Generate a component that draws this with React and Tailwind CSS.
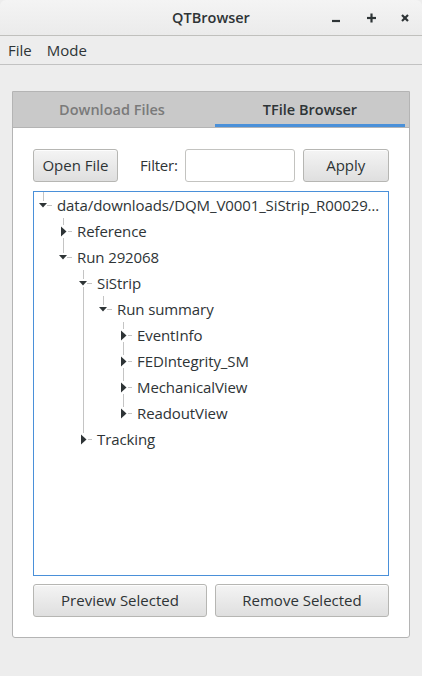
import React from 'react';

const font = { fontFamily: "'Open Sans', 'Noto Sans', sans-serif" };

const rows = [
  { depth: 0, label: "data/downloads/DQM_V0001_SiStrip_R00029…", arrow: "down", next: false, guides: [] },
  { depth: 1, label: "Reference", arrow: "right", next: true, guides: [false] },
  { depth: 1, label: "Run 292068", arrow: "down", next: false, guides: [false] },
  { depth: 2, label: "SiStrip", arrow: "down", next: true, guides: [false, false] },
  { depth: 3, label: "Run summary", arrow: "down", next: false, guides: [false, false, true] },
  { depth: 4, label: "EventInfo", arrow: "right", next: true, guides: [false, false, true, false] },
  { depth: 4, label: "FEDIntegrity_SM", arrow: "right", next: true, guides: [false, false, true, false] },
  { depth: 4, label: "MechanicalView", arrow: "right", next: true, guides: [false, false, true, false] },
  { depth: 4, label: "ReadoutView", arrow: "right", next: false, guides: [false, false, true, false] },
  { depth: 2, label: "Tracking", arrow: "right", next: false, guides: [false, false] },
];

const Guide = ({ on }) => (
  <svg width="20" height="26" className="shrink-0">
    {on && <line x1="9.5" y1="0" x2="9.5" y2="26" stroke="#c4c4c4" />}
  </svg>
);

const Branch = ({ arrow, next }) => (
  <svg width="20" height="26" className="shrink-0">
    {arrow === "down" ? (
      <>
        <line x1="9.5" y1="0" x2="9.5" y2="9" stroke="#c4c4c4" />
        {next && <line x1="9.5" y1="17" x2="9.5" y2="26" stroke="#c4c4c4" />}
        <line x1="13" y1="13.5" x2="18" y2="13.5" stroke="#c4c4c4" />
        <polygon points="5,11 13,11 9,15.5" fill="#2e3436" />
      </>
    ) : (
      <>
        <line x1="9.5" y1="0" x2="9.5" y2="7" stroke="#c4c4c4" />
        {next && <line x1="9.5" y1="20" x2="9.5" y2="26" stroke="#c4c4c4" />}
        <line x1="14" y1="13.5" x2="18" y2="13.5" stroke="#c4c4c4" />
        <polygon points="7,8.5 12.5,13.5 7,18.5" fill="#2e3436" />
      </>
    )}
  </svg>
);

const Button = ({ children, className = "" }) => (
  <button
    className={`h-[33px] rounded-[3px] border border-[#b6b6b3] bg-gradient-to-b from-[#f4f4f4] to-[#dfdfdf] text-[15px] text-[#2e3436] shadow-[0_1px_0_rgba(255,255,255,0.8)_inset] ${className}`}
  >
    {children}
  </button>
);

export default function App() {
  return (
    <div className="w-[422px] h-[676px] bg-[#ededed] flex flex-col text-[#2e3436]" style={font}>
      {/* Title bar */}
      <div className="h-[36px] shrink-0 rounded-t-[6px] bg-gradient-to-b from-[#f4f4f4] to-[#ebebeb] border-b border-[#c0c0bd] flex items-center relative">
        <div className="flex-1 text-center text-[14.5px] font-semibold text-[#2e3436]">QTBrowser</div>
        <div className="absolute right-[2px] top-0 h-full flex items-center">
          <svg width="34" height="36" viewBox="0 0 34 36">
            <line x1="0" y1="21" x2="8" y2="21" stroke="#2e3436" strokeWidth="2.2" />
          </svg>
          <svg width="34" height="36" viewBox="0 0 34 36">
            <line x1="1" y1="18" x2="10" y2="18" stroke="#2e3436" strokeWidth="2.2" />
            <line x1="5.5" y1="13.5" x2="5.5" y2="22.5" stroke="#2e3436" strokeWidth="2.2" />
          </svg>
          <svg width="20" height="36" viewBox="0 0 20 36">
            <line x1="2" y1="15" x2="8" y2="21" stroke="#2e3436" strokeWidth="2.2" />
            <line x1="8" y1="15" x2="2" y2="21" stroke="#2e3436" strokeWidth="2.2" />
          </svg>
        </div>
      </div>

      {/* Menu bar */}
      <div className="h-[29px] shrink-0 border-b border-[#c2c2c2] flex items-center gap-[15px] pl-[8px] text-[15px]">
        <span>File</span>
        <span>Mode</span>
      </div>

      {/* Tab widget */}
      <div className="ml-[12px] mr-[12px] mt-[26px] w-[398px] border border-[#b4b4b4] rounded-b-[3px] flex flex-col bg-white">
        <div className="h-[36px] bg-[#c9c9c9] border-b border-[#b4b4b4] flex text-[14.5px] font-semibold">
          <div className="flex-1 flex items-center justify-center text-[#7a7a7a] pt-[1px]">Download Files</div>
          <div className="flex-1 flex flex-col">
            <div className="flex-1 flex items-center justify-center text-[#2e3436] pt-[4px]">TFile Browser</div>
            <div className="h-[3px] mx-[4px] bg-[#4a90d9]" />
          </div>
        </div>

        <div className="px-[20px] pt-[21px] pb-[20px] flex flex-col">
          <div className="flex items-center">
            <Button className="w-[85px]">Open File</Button>
            <span className="ml-[22px] text-[15px] tracking-[-0.2px]">Filter:</span>
            <input className="ml-[7px] w-[110px] h-[33px] rounded-[3px] border border-[#c3c3c0] bg-white outline-none" />
            <Button className="ml-[8px] w-[86px]">Apply</Button>
          </div>

          <div className="mt-[9px] h-[385px] border border-[#4a90d9] bg-white overflow-hidden">
            {rows.map((r, i) => (
              <div key={i} className="h-[26px] flex items-center">
                {r.guides.map((g, j) => (
                  <Guide key={j} on={g} />
                ))}
                <Branch arrow={r.arrow} next={r.next} />
                <span className="ml-[3px] text-[15px] tracking-[-0.1px] whitespace-nowrap">{r.label}</span>
              </div>
            ))}
          </div>

          <div className="mt-[8px] flex gap-[8px]">
            <Button className="flex-1">Preview Selected</Button>
            <Button className="flex-1">Remove Selected</Button>
          </div>
        </div>
      </div>
    </div>
  );
}
